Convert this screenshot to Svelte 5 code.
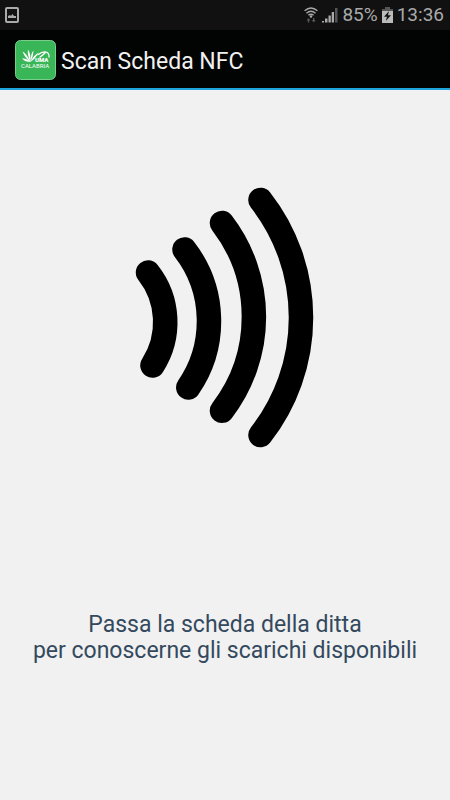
<script lang="ts">
  export let title = 'Scan Scheda NFC'
  export let battery = 85
  export let time = '13:36'

  const waves = [
    'M18 92.5 A80 80 0 0 1 22.5 185.5',
    'M54.5 69.5 A117 117 0 0 1 58.3 207.5',
    'M92 43 A154 154 0 0 1 92 230.7',
    'M130.5 20 A190.7 190.7 0 0 1 130.5 255',
  ]
</script>

<div class="screen">
  <div class="status">
    <svg class="picture" width="14" height="16" viewBox="0 0 14 16" aria-hidden="true">
      <rect x="1" y="1" width="12" height="14" rx="1" fill="none" stroke="#aaa" stroke-width="2" />
      <path d="M3 11 V9 L5 8 L6 9 L7.500 7 L9 9 L11 9 V11 Z" fill="#aaa" />
    </svg>
    <svg width="14" height="16" viewBox="0 0 14 16" aria-hidden="true">
      <g fill="none" stroke="#aaa" stroke-width="1.400">
        <path d="M0.600 3.800 Q7 -1.600 13.400 3.800" />
        <path d="M2.500 6.200 Q7 2.400 11.500 6.200" />
        <path d="M4.400 8.300 Q7 6.200 9.600 8.300" />
      </g>
      <circle cx="7" cy="9.500" r="1.200" fill="#aaa" />
      <path d="M2.500 13.500 L4.500 11 L6.500 13.500 H5.200 V15.500 H3.800 V13.500 Z M7.700 13 H9 V11 H10.400 V13 H11.700 L9.700 15.500 Z" fill="#555" />
    </svg>
    <svg width="16" height="16" viewBox="0 0 16 16" aria-hidden="true">
      <path d="M0 14 H2 V15.500 H0 Z M3 11.500 H5.500 V15.500 H3 Z M6.500 8.500 H8.800 V15.500 H6.500 Z M9.700 5 H12 V15.500 H9.700 Z" fill="#aaa" />
      <path d="M13 1 H15.500 V15.500 H13 Z" fill="#555" />
    </svg>
    <span>{battery}%</span>
    <svg width="11" height="16" viewBox="0 0 11 16" aria-hidden="true">
      <path d="M3 0 H8 V2 H11 V4 H0 V2 H3 Z" fill="#555" />
      <path d="M0 4 H11 V16 H0 Z" fill="#bbb" />
      <path d="M7 4 L2 9.700 H5 L3.800 14 L9 8.300 H6 Z" fill="#111" />
    </svg>
    <span>{time}</span>
  </div>

  <header>
    <svg class="logo" width="41" height="40" viewBox="0 0 41 40" role="img" aria-label="UMA Calabria">
      <rect x="0.500" y="0.500" width="40" height="39" rx="5" fill="#39b657" stroke="#79ce8c" />
      <g fill="#fff">
        <path d="M15.500 22 Q10 18 7.500 11.500 Q12 14 15.500 22 Z" />
        <path d="M15.500 22 Q12 15 13 9.500 Q16 14 15.500 22 Z" />
        <path d="M15.500 22 Q15.500 14 18.500 10.500 Q18.500 16 15.500 22 Z" />
        <path d="M15.500 22 Q18 16 23.500 12.500 Q21 18 15.500 22 Z" />
        <path d="M15.500 22 Q10 22 7 18.500 Q12 18 15.500 22 Z" />
      </g>
      <path d="M22.500 15 Q27 11.500 31 12 Q34.500 13 34 17.500 M30.500 12.500 Q28 15 24.500 17.500" fill="none" stroke="#fff" stroke-width="1.200" />
      <text x="20" y="22" class="uma">UMA</text>
      <text x="6" y="28" class="calabria">CALABRIA</text>
    </svg>
    <h1>{title}</h1>
  </header>

  <main>
    <svg class="nfc" viewBox="0 0 190 275" role="img" aria-label="NFC">
      {#each waves as d}
        <path {d} />
      {/each}
    </svg>
    <p>Passa la scheda della ditta<br />per conoscerne gli scarichi disponibili</p>
  </main>
</div>

<style>
  :global(body) {
    background: #f1f1f1;
  }

  .screen {
    font-family: Roboto, 'Liberation Sans', sans-serif;
    min-height: 100vh;
    display: flex;
    flex-direction: column;
  }

  .status {
    display: flex;
    align-items: center;
    gap: 4px;
    height: 30px;
    padding: 0 6px 0 5px;
    background: #111;
    color: #aaa;
    font-size: 19px;
    line-height: 30px;
  }

  .picture {
    margin-right: auto;
  }

  header {
    display: flex;
    align-items: center;
    gap: 5px;
    height: 56px;
    padding: 2px 15px 0;
    background: #020303;
    border-bottom: 2px solid #1ca6dc;
  }

  h1 {
    margin: 0;
    padding-top: 4px;
    color: #f1f1f1;
    font-size: 23px;
    font-weight: 400;
    line-height: 28px;
  }

  .uma {
    font-size: 6px;
    font-weight: 900;
    fill: #fff;
  }

  .calabria {
    font-size: 6px;
    fill: #fff;
  }

  main {
    display: flex;
    flex-direction: column;
    align-items: center;
    padding: 90px 16px;
  }

  .nfc {
    width: 190px;
    fill: none;
    stroke: #000;
    stroke-width: 24.5;
    stroke-linecap: round;
  }

  p {
    margin: 157px 0 0;
    color: #34495e;
    font-size: 23px;
    line-height: 26px;
    text-align: center;
  }
</style>
